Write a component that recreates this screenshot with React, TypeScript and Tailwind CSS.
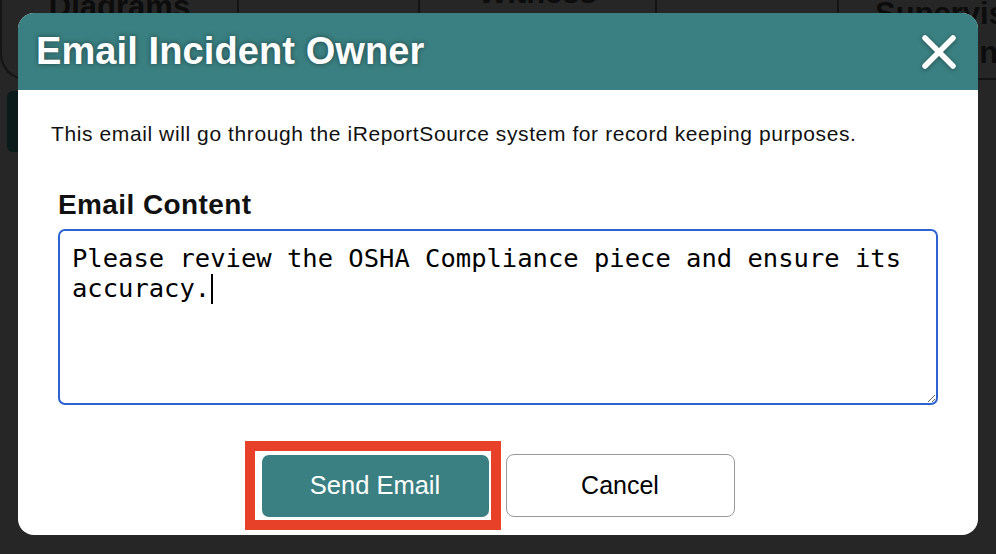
import { useState } from "react";

const tabs = [
  { id: 1, lines: ["Diagrams"], width: "w-[237px]", box: "items-center -mt-[13px]" },
  { id: 2, lines: [""], width: "w-[181px]", box: "items-center" },
  { id: 3, lines: ["Witness"], width: "w-[237px]", box: "items-center -mt-[27px]" },
  { id: 4, lines: [""], width: "w-[182px]", box: "items-center" },
  { id: 5, lines: ["Supervisor", "Signature"], width: "w-[240px]", box: "items-start pl-[36px] -mt-[6px]" },
];

const CloseIcon = () => (
  <svg width="36" height="36" viewBox="0 0 36 36" className="drop-shadow-[0_1px_2px_rgba(0,0,0,0.35)]">
    <path d="M4 4 L32 32 M32 4 L4 32" stroke="white" strokeWidth="5.5" strokeLinecap="round" />
  </svg>
);

const App = () => {
  const [message] = useState(
    "Please review the OSHA Compliance piece and ensure its accuracy."
  );

  return (
    <div className="relative w-[996px] h-[554px] overflow-hidden bg-[#262626] font-['Liberation_Sans',Arial,sans-serif]">
      {/* page behind the overlay */}
      <div className="flex h-[80px] border-b-2 border-l-2 border-[#141414] rounded-bl-[26px] overflow-hidden">
        {tabs.map((tab) => (
          <div
            key={tab.id}
            className={`${tab.width} shrink-0 border-r-2 border-[#141414] text-[31px] font-bold leading-[39px] text-[#0c0c0c]`}
          >
            <div className={`flex flex-col ${tab.box}`}>
              {tab.lines.map((line, i) => (
                <p key={line} className={i === 1 ? "ml-[56px]" : ""}>
                  {line}
                </p>
              ))}
            </div>
          </div>
        ))}
      </div>
      <div className="ml-[7px] mt-[11px] w-[220px] h-[61px] rounded-md bg-[#0a1a1a]" />

      {/* dialog */}
      <div className="absolute left-[18px] top-[13px] w-[960px] h-[522px] rounded-[16px] overflow-hidden bg-white flex flex-col">
        <div className="h-[77px] shrink-0 bg-[#3a7f81] flex items-center justify-between pl-[18px] pr-[21px]">
          <h2 className="text-[38px] font-bold leading-[44px] text-white mt-[-2px] tracking-[0.1px] [text-shadow:0_0_5px_rgba(0,0,0,0.45)]">
            Email Incident Owner
          </h2>
          <button className="mt-[1px]">
            <CloseIcon />
          </button>
        </div>

        <div className="px-[40px] pt-[32px] pb-[19px] flex flex-col">
          <p className="-ml-[7px] text-[21px] leading-[24px] tracking-[0.6px] text-[#111]">
            This email will go through the iReportSource system for record keeping purposes.
          </p>

          <label className="mt-[43px] text-[28px] font-bold leading-[32px] tracking-[0.4px] text-[#111]">
            Email Content
          </label>
          <div className="mt-[8px] h-[176px] resize overflow-auto rounded-[7px] border-2 border-[#2c63d1] px-[12px] pt-[12px] font-['DejaVu_Sans_Mono',monospace] text-[25.5px] leading-[30px] text-black break-words">
            {message}
            <span className="inline-block w-[1.5px] h-[30px] ml-[1px] align-[-7px] bg-black" />
          </div>

          <div className="mt-[49px] flex justify-center items-center gap-[17px]">
            <div className="relative">
              <button className="w-[227px] h-[62px] rounded-[7px] bg-[#3a7f81] text-white text-[25.5px]">
                Send Email
              </button>
              <div className="pointer-events-none absolute -left-[17px] -top-[14px] -right-[12px] -bottom-[13px] border-[10px] border-[#e8412a]" />
            </div>
            <button className="w-[229px] h-[63px] rounded-[8px] border border-[#999] bg-white text-black text-[25px]">
              Cancel
            </button>
          </div>
        </div>
      </div>
    </div>
  );
};

export default App;
